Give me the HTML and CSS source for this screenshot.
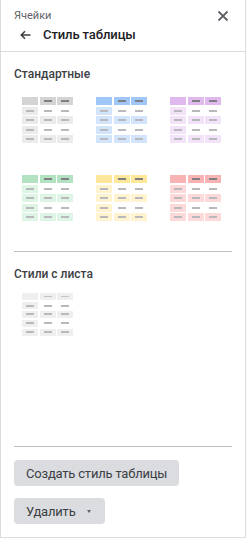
FILE: index.html
```html
<!DOCTYPE html>
<html lang="ru">
<head>
  <meta charset="UTF-8">
  <meta name="viewport" content="width=device-width, initial-scale=1.0">
  <title>Стиль таблицы</title>
  <link rel="stylesheet" href="styles.css">
</head>
<body>
  <div class="panel">
    <div class="header">
      <div class="header-top">
        <span class="crumb">Ячейки</span>
        <svg class="close" width="12" height="12" viewBox="0 0 12 12">
          <path d="M1.5 1.5 L10.5 10.5 M10.5 1.5 L1.5 10.5" stroke="#5f6368" stroke-width="1.8" fill="none"/>
        </svg>
      </div>
      <div class="header-title">
        <svg class="back" width="11" height="10" viewBox="0 0 11 10">
          <path d="M10.5 5 H1.5 M5 1.3 L1.3 5 L5 8.7" stroke="#3c4043" stroke-width="1.6" fill="none"/>
        </svg>
        <h1>Стиль таблицы</h1>
      </div>
    </div>

    <div class="section">
      <h2>Стандартные</h2>
      <div class="thumbs" id="standard"></div>
    </div>

    <div class="divider"></div>

    <div class="section sheet">
      <h2>Стили с листа</h2>
      <div class="thumbs" id="fromSheet"></div>
    </div>

    <div class="footer">
      <div class="divider"></div>
      <button class="btn">Создать стиль таблицы</button>
      <button class="btn btn-menu">Удалить <span class="caret"></span></button>
    </div>
  </div>

  <script>
    // rows: h = header band, b = band, w = white
    const layout = [
      ["h", "h", "h"],
      ["b", "w", "w"],
      ["b", "b", "b"],
      ["b", "w", "w"],
      ["b", "b", "b"]
    ];

    function makeThumb(theme) {
      const t = document.createElement("div");
      t.className = "thumb " + theme;
      layout.forEach((row, r) => {
        row.forEach((kind, c) => {
          const cell = document.createElement("div");
          cell.className = "cell " + kind;
          if (!(r === 0 && c === 0)) {
            const dash = document.createElement("i");
            if (r === 0) dash.className = "dark";
            cell.appendChild(dash);
          }
          t.appendChild(cell);
        });
      });
      return t;
    }

    const standard = document.getElementById("standard");
    ["grey", "blue", "purple", "green", "yellow", "red"].forEach(name => {
      standard.appendChild(makeThumb(name));
    });

    document.getElementById("fromSheet").appendChild(makeThumb("plain"));
  </script>
</body>
</html>
```

FILE: styles.css
```css
body {
    margin: 0;
    padding: 0;
    font-family: Roboto, "Noto Sans", Arial, sans-serif;
    background-color: #fff;
}

.panel {
    height: 100vh;
    box-sizing: border-box;
    border: 1px solid #dadce0;
    border-top: none;
    display: flex;
    flex-direction: column;
}

.header {
    padding: 8px 0 0 13px;
    border-bottom: 1px solid #dadce0;
}

.header-top {
    display: flex;
    justify-content: space-between;
    align-items: center;
    height: 16px;
    padding-right: 16px;
}

.crumb {
    font-size: 11px;
    line-height: 16px;
    color: #5f6368;
}

.header-title {
    display: flex;
    align-items: center;
    height: 20px;
    margin-top: 1px;
    padding-bottom: 6px;
}

.back {
    margin-left: 6px;
    margin-right: 12px;
}

h1 {
    margin: 0;
    font-size: 13px;
    font-weight: 500;
    letter-spacing: -0.1px;
    line-height: 20px;
    color: #202124;
}

.section {
    padding: 14px 13px 0;
}

h2 {
    margin: 0;
    font-size: 12px;
    font-weight: 500;
    line-height: 16px;
    color: #3c4043;
}

.thumbs {
    display: grid;
    grid-template-columns: repeat(3, 51px);
    column-gap: 23px;
    row-gap: 32px;
    padding: 15px 0 30px 8px;
}

.sheet .thumbs {
    padding-top: 11px;
}

.thumb {
    width: 51px;
    height: 46px;
    display: grid;
    grid-template-columns: repeat(3, 1fr);
    grid-template-rows: repeat(5, 1fr);
    gap: 1.5px;
}

.sheet .thumb {
    height: 43px;
}

.cell {
    display: flex;
    align-items: center;
    justify-content: center;
}

.cell i {
    display: block;
    width: 8px;
    height: 2px;
    background-color: #b9b9bd;
}

.cell i.dark {
    background-color: #808084;
}

.cell.w {
    background-color: #fff;
}

.grey .h { background-color: #d4d4d4; }
.grey .b { background-color: #ebebeb; }

.blue .h { background-color: #9fc7fa; }
.blue .b { background-color: #d3e5fd; }

.purple .h { background-color: #e0b9ee; }
.purple .b { background-color: #f3e3f8; }

.green .h { background-color: #b3e2c3; }
.green .b { background-color: #def4e4; }

.yellow .h { background-color: #fde79a; }
.yellow .b { background-color: #fff4cf; }

.red .h { background-color: #f9b3b3; }
.red .b { background-color: #fdd9d9; }

.plain .h,
.plain .b { background-color: #efefef; }

.plain .cell i.dark {
    height: 1px;
    background-color: #c4c4c4;
}

.divider {
    height: 1px;
    margin: 0 13px;
    background-color: #bfbfc6;
}

.footer {
    margin-top: auto;
    display: flex;
    flex-direction: column;
    align-items: flex-start;
    padding-bottom: 13px;
}

.footer .divider {
    align-self: stretch;
    margin-bottom: 13px;
}

.btn {
    margin-left: 13px;
    height: 26px;
    padding: 0 12px;
    border: none;
    border-radius: 4px;
    background-color: #dadce0;
    color: #3c4043;
    font-family: Roboto, "Noto Sans", Arial, sans-serif;
    font-size: 13px;
    letter-spacing: -0.2px;
    cursor: pointer;
}

.btn + .btn {
    margin-top: 12px;
}

.btn-menu {
    display: flex;
    align-items: center;
    padding-right: 14px;
}

.caret {
    display: inline-block;
    margin-left: 11px;
    width: 0;
    height: 0;
    border-left: 2.5px solid transparent;
    border-right: 2.5px solid transparent;
    border-top: 3px solid #5f6368;
}
```
